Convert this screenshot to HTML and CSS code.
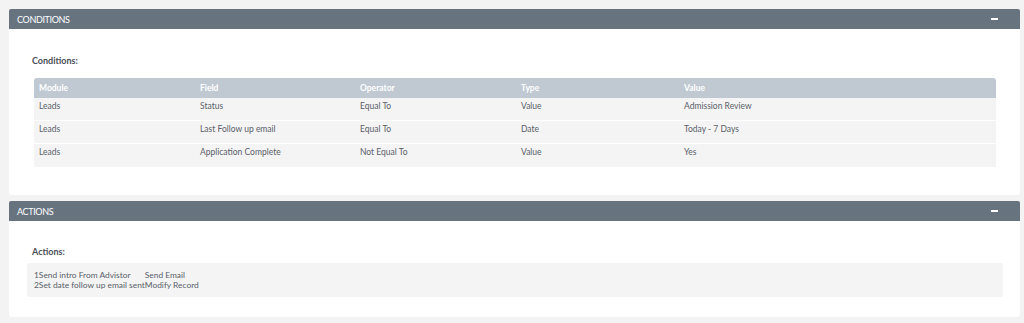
FILE: index.html
```html
<!DOCTYPE html>
<html>
<head>
<meta charset="utf-8">
<link rel="stylesheet" href="styles.css">
</head>
<body>
<div class="panel">
  <div class="panel-head"><span class="title">CONDITIONS</span><span class="minus"></span></div>
  <div class="panel-body cond-body">
    <div class="label">Conditions:</div>
    <div class="grid">
      <div class="row head"><div>Module</div><div>Field</div><div>Operator</div><div>Type</div><div>Value</div></div>
      <div class="row"><div>Leads</div><div>Status</div><div>Equal To</div><div>Value</div><div>Admission Review</div></div>
      <div class="row"><div>Leads</div><div>Last Follow up email</div><div>Equal To</div><div>Date</div><div>Today - 7 Days</div></div>
      <div class="row"><div>Leads</div><div>Application Complete</div><div>Not Equal To</div><div>Value</div><div>Yes</div></div>
    </div>
  </div>
</div>
<div class="panel">
  <div class="panel-head"><span class="title">ACTIONS</span><span class="minus"></span></div>
  <div class="panel-body act-body">
    <div class="label">Actions:</div>
    <div class="box">
      <table class="acts">
        <tr><td>1</td><td>Send intro From Advistor</td><td>Send Email</td></tr>
        <tr><td>2</td><td>Set date follow up email sent</td><td>Modify Record</td></tr>
      </table>
    </div>
  </div>
</div>
</body>
</html>
```
FILE: styles.css
```css
html, body {
  margin: 0;
  padding: 0;
}
body {
  background: #f3f3f3;
  font-family: Lato, "Open Sans", sans-serif;
  color: #596069;
  padding-top: 9px;
}
.panel {
  margin-left: 9px;
  width: 1011px;
  background: #fff;
  border-radius: 3px;
  margin-bottom: 6px;
}
.panel-head {
  height: 20px;
  background: #677480;
  display: flex;
  align-items: center;
  justify-content: space-between;
  padding: 0 22px 0 8px;
  border-radius: 2px 2px 0 0;
}
.title {
  color: #fff;
  font-size: 9px;
  letter-spacing: -0.35px;
}
.minus {
  width: 7px;
  height: 2px;
  background: #fff;
}
.panel-body {
  border-radius: 0 0 3px 3px;
}
.cond-body {
  padding: 25px 24px 28px 25px;
}
.label {
  font-size: 9px;
  font-weight: bold;
  line-height: 13px;
  color: #4a4f57;
  margin-left: -2px;
}
.cond-body .label {
  margin-bottom: 11px;
}
.grid {
  font-size: 8.5px;
}
.row {
  display: grid;
  grid-template-columns: 161px 160px 161px 163px 1fr;
  background: #f4f4f4;
  height: 23px;
  border-bottom: 1px solid #fff;
  line-height: 13px;
  padding-top: 2px;
  box-sizing: border-box;
}
.row:last-child {
  border-bottom: 0;
}
.row > div {
  padding-left: 5px;
}
.row.head {
  background: #c0c9d1;
  color: #fff;
  font-weight: bold;
  height: 20px;
  padding-top: 0;
  align-items: center;
  border-radius: 3px 3px 0 0;
  border-bottom: 0;
}
.act-body {
  padding: 24px 17px 20px 18px;
}
.act-body .label {
  margin-left: 5px;
  margin-bottom: 5px;
}
.box {
  background: #f4f4f4;
  border-radius: 2px;
  padding: 7px 7px;
}
.acts {
  border-collapse: collapse;
  font-size: 8.4px;
  line-height: 10px;
}
.acts td {
  padding: 0;
  white-space: nowrap;
}
```
